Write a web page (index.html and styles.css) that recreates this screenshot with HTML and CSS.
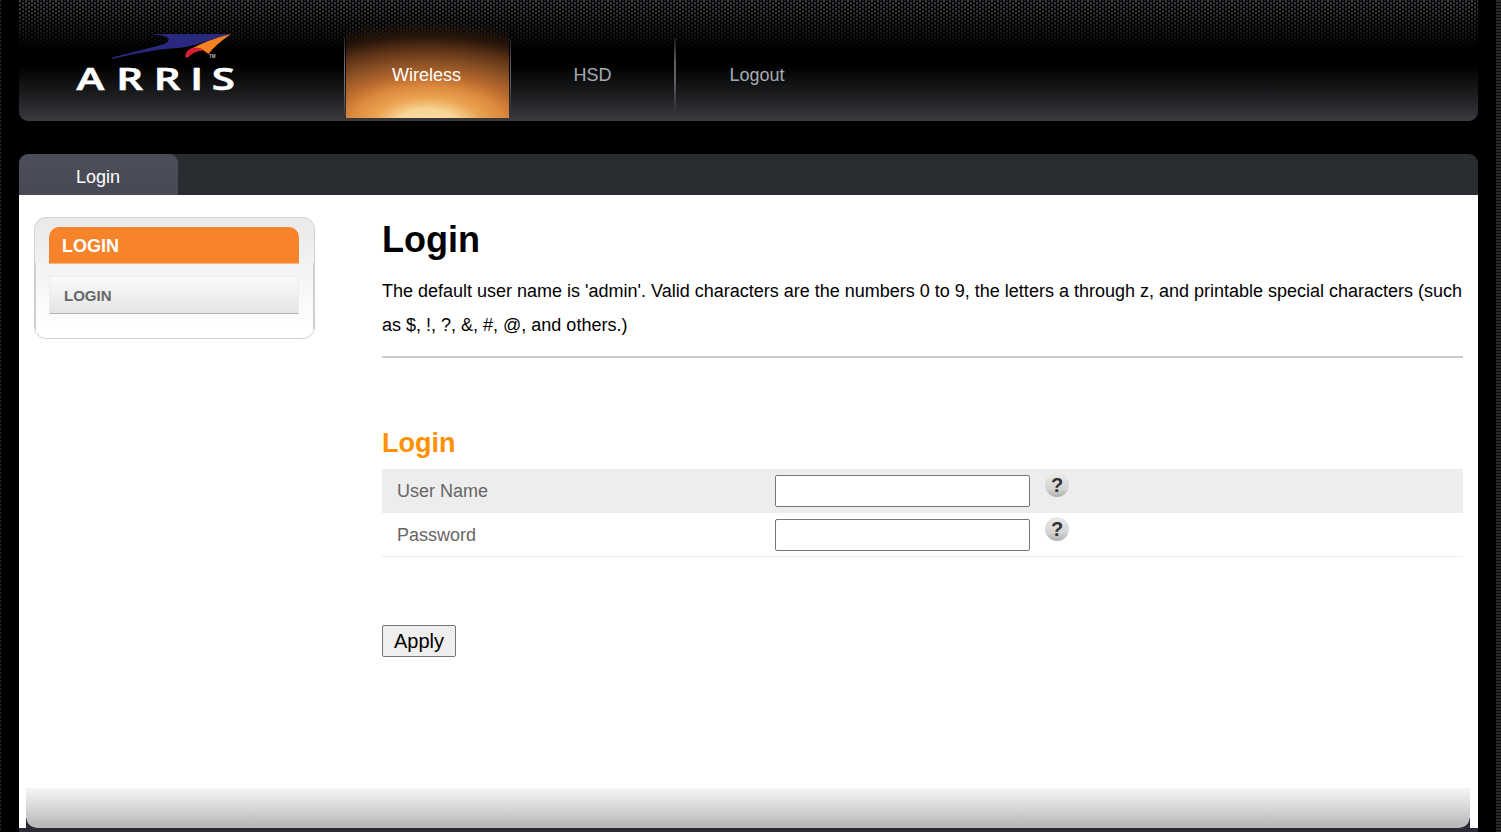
FILE: index.html
```html
<!DOCTYPE html>
<html lang="en">
<head>
<meta charset="utf-8">
<title>Login</title>
<link rel="stylesheet" href="styles.css">
</head>
<body>
<div class="page">
  <header class="header">
    <svg class="mesh" width="1459" height="50" aria-hidden="true">
      <defs>
        <pattern id="mesh" width="6" height="4" patternUnits="userSpaceOnUse">
          <rect x="0" y="0" width="2" height="2" fill="#3c3e42"/>
          <rect x="3" y="2" width="2" height="2" fill="#3c3e42"/>
          <rect x="0" y="2" width="2" height="1" fill="#222427"/>
          <rect x="3" y="0" width="2" height="1" fill="#222427"/>
        </pattern>
        <linearGradient id="meshFade" x1="0" y1="0" x2="0" y2="1">
          <stop offset="0" stop-color="#000" stop-opacity="0"/>
          <stop offset=".3" stop-color="#000" stop-opacity=".25"/>
          <stop offset="1" stop-color="#000"/>
        </linearGradient>
      </defs>
      <rect width="1459" height="50" fill="url(#mesh)"/>
      <rect width="1459" height="50" fill="url(#meshFade)"/>
    </svg>
    <svg class="logo" viewBox="0 0 170 70" role="img" aria-label="ARRIS">
      <path d="M83 4H162L129 14Q115 18 102 18.500Q75 21 43 29Q42 28 45 27L92 15Q102 12 99 8 95 5 83 4Z" fill="#29297f"/>
      <path d="M162 4Q138 10 122 19Q131 17 134 20L139.500 24Q146 15 162 4Z" fill="#f58220"/>
      <path d="M123 18.500Q116 21 117 27L119 27Q124 21 134 20Q128 17 123 18.500Z" fill="#d81f35" stroke="#d81f35"/>
      <text class="trademark" x="140" y="28">TM</text>
      <g transform="scale(1.4 1)">
        <text class="wordmark" x="5.300 33.800 60.600 86.700 102" y="60">ARRIS</text>
      </g>
    </svg>
    <nav class="nav">
      <a class="nav-item active">Wireless</a>
      <a class="nav-item">HSD</a>
      <a class="nav-item">Logout</a>
    </nav>
  </header>
  <div class="tabs"><a class="tab">Login</a></div>
  <div class="body">
    <aside class="side">
      <div class="side-title">LOGIN</div>
      <a class="side-link">LOGIN</a>
    </aside>
    <main class="main">
      <h1>Login</h1>
      <p class="intro">The default user name is 'admin'. Valid characters are the numbers 0 to 9, the letters a through z, and printable special characters (such as $, !, ?, &amp;, #, @, and others.)</p>
      <h2>Login</h2>
      <form>
        <div class="row shaded"><label for="user">User Name</label><input id="user" type="text"><span class="help">?</span></div>
        <div class="row"><label for="pass">Password</label><input id="pass" type="password"><span class="help">?</span></div>
        <button class="apply" type="button">Apply</button>
      </form>
    </main>
  </div>
  <footer class="footer"><div class="footer-bar"></div></footer>
</div>
</body>
</html>
```
FILE: styles.css
```css
* { box-sizing: border-box; }
body {
  margin: 0;
  height: 832px;
  overflow: hidden;
  font: 18px/20px "Liberation Sans", Arial, sans-serif;
  background:
    repeating-linear-gradient(#292929 0 2px, #0b0b0b 2px 3px) right / 5px 100% no-repeat,
    repeating-linear-gradient(#292929 0 2px, #000 2px 4px) left / 1px 100% no-repeat,
    #000;
}
.page {
  width: 1459px;
  height: 832px;
  margin-left: 19px;
  display: flex;
  flex-direction: column;
}
.header {
  position: relative;
  height: 121px;
  display: flex;
  border-radius: 0 0 9px 9px;
  background: linear-gradient(#000 0 65px, #1c1d1f 95px, #393b41 121px);
  overflow: hidden;
  flex: none;
}
.mesh { position: absolute; top: 0; left: 0; }
.logo { position: relative; width: 170px; height: 70px; margin: 30px 105px 0 50px; flex: none; }
.wordmark { font: 600 30px "Open Sans", sans-serif; fill: #fff; stroke: #fff; stroke-width: .7; }
.trademark { font: 700 4.5px "Liberation Sans", sans-serif; fill: #bbb; }
.nav { position: relative; display: flex; }
.nav-item {
  position: relative;
  width: 165px;
  height: 118px;
  padding-top: 65px;
  text-align: center;
  color: #a7abb3;
}
.nav-item:last-child { padding-right: 1px; }
.nav-item:nth-child(-n+2)::after {
  content: "";
  position: absolute;
  right: -1px;
  top: 38px;
  width: 2px;
  height: 76px;
  background: linear-gradient(#17181a, #606266 35%, #5b5d61 60%, #2c2d3100);
}
.nav-item:first-child::after { width: 1px; }
.nav-item.active {
  margin-left: 1px;
  padding-right: 2px;
  color: #fff;
  background: radial-gradient(ellipse 215px 104px at 50% 124px, #fadfae 0, #f8d596 14%, #eba452 25%, #dd8a3e 36%, #b96a2e 46%, #8d5225 58%, #5c3216 72%, rgba(50,27,12,.75) 84%, rgba(25,12,4,0) 100%) 1px 0 / 163px 118px no-repeat;
}
.nav-item.active::before {
  content: "";
  position: absolute;
  left: -1px;
  top: 38px;
  width: 1px;
  height: 80px;
  background: linear-gradient(#222, #77797d 35%, #696b6e 65%, #333);
}
.tabs { height: 41px; margin-top: 33px; background: #292c31; border-radius: 9px 9px 0 0; flex: none; overflow: hidden; }
.tab { display: block; width: 159px; height: 41px; padding: 13px 1px 0 0; text-align: center; color: #fff; background: linear-gradient(#4c4f59, #474a54); border-radius: 9px 9px 0 0; }
.body { display: flex; align-items: flex-start; height: 593px; padding: 22px 15px 0; background: #fff; flex: none; }
.side {
  width: 281px;
  height: 122px;
  padding: 9px 15px 0 14px;
  border: 1px solid #d2d2d2;
  border-radius: 12px;
  background:
    linear-gradient(#ccc, #ccc) left 45px / 1px 66px no-repeat,
    linear-gradient(#ccc, #ccc) right 45px / 1px 66px no-repeat,
    linear-gradient(#e9e9e9, #fff 110px);
}
.side-title { height: 37px; padding: 9px 13px; color: #fff; font-weight: bold; background: #f7842a; border-radius: 10px 10px 0 0; border-bottom: 1px solid #fab57b; }
.side-link { display: block; height: 38px; margin-top: 12px; padding: 9px 14px; color: #666; font-size: 15px; font-weight: bold; background: linear-gradient(#fafafa, #e5e5e5); border: 1px solid #ededed; border-bottom-color: #b5b5b5; }
.main { width: 1081px; margin-left: 67px; }
h1 { margin: 3px 0 14px; font-size: 36px; line-height: 40px; }
.intro { margin: 0; height: 84px; line-height: 34px; border-bottom: 2px solid #ccc; }
h2 { margin: 70px 0 11px; font-size: 27px; line-height: 30px; color: #ff9000; }
.row { display: flex; align-items: flex-start; height: 44px; padding: 6px 15px 0; border-bottom: 1px solid #ededed; }
.shaded { background: #ededed; }
.row label { width: 378px; padding-top: 6px; color: #666; }
.row input { width: 255px; height: 32px; border: 1px solid #767676; border-radius: 2px; background: #fff; }
.help {
  width: 24px;
  height: 24px;
  margin: -2px 0 0 15px;
  border-radius: 50%;
  text-align: center;
  font: bold 20px/24px "Liberation Sans", sans-serif;
  color: #333;
  background: linear-gradient(#eaeaea, #d5d5d3 65%, #b0b0b0);
}
.apply { display: block; width: 74px; height: 32px; margin-top: 68px; padding: 0; border: 1px solid #767676; border-radius: 2px; background: #efefef; color: #000; font: 20px "Liberation Sans", sans-serif; }
.footer { height: 44px; padding: 0 8px 4px 7px; background: linear-gradient(#fff 0 40px, #292a32 40px); }
.footer-bar {
  height: 40px;
  background:
    radial-gradient(circle at 100% 0, transparent 9px, #292a32 10px) left bottom / 10px 10px no-repeat,
    radial-gradient(circle at 0 0, transparent 9px, #292a32 10px) right bottom / 10px 10px no-repeat,
    linear-gradient(#f6f6f6, #b5b6b8);
}
```
